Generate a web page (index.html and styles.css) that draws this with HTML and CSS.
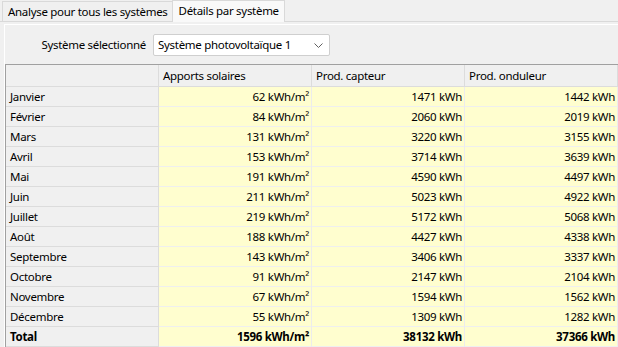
FILE: index.html
```html
<!DOCTYPE html>
<html lang="fr">
<head>
<meta charset="utf-8">
<link rel="stylesheet" href="styles.css">
</head>
<body>
<div class="tabs">
  <div class="tab">Analyse pour tous les systèmes</div>
  <div class="tab active">Détails par système</div>
</div>
<div class="panel">
  <div class="page">
    <div class="selector">
      <label class="sel-label">Système sélectionné</label>
      <div class="combo">
        <span>Système photovoltaïque 1</span>
        <svg class="chev" width="9" height="5" viewBox="0 0 9 5"><path d="M0.5 0.5 L4.5 4.5 L8.5 0.5" fill="none" stroke="#606060" stroke-width="1"/></svg>
      </div>
    </div>
    <div class="grid">
      <div class="c h first"></div>
      <div class="c h">Apports solaires</div>
      <div class="c h">Prod. capteur</div>
      <div class="c h">Prod. onduleur</div>

      <div class="c first">Janvier</div><div class="c v">62 kWh/m²</div><div class="c v">1471 kWh</div><div class="c v">1442 kWh</div>
      <div class="c first">Février</div><div class="c v">84 kWh/m²</div><div class="c v">2060 kWh</div><div class="c v">2019 kWh</div>
      <div class="c first">Mars</div><div class="c v">131 kWh/m²</div><div class="c v">3220 kWh</div><div class="c v">3155 kWh</div>
      <div class="c first">Avril</div><div class="c v">153 kWh/m²</div><div class="c v">3714 kWh</div><div class="c v">3639 kWh</div>
      <div class="c first">Mai</div><div class="c v">191 kWh/m²</div><div class="c v">4590 kWh</div><div class="c v">4497 kWh</div>
      <div class="c first">Juin</div><div class="c v">211 kWh/m²</div><div class="c v">5023 kWh</div><div class="c v">4922 kWh</div>
      <div class="c first">Juillet</div><div class="c v">219 kWh/m²</div><div class="c v">5172 kWh</div><div class="c v">5068 kWh</div>
      <div class="c first">Août</div><div class="c v">188 kWh/m²</div><div class="c v">4427 kWh</div><div class="c v">4338 kWh</div>
      <div class="c first">Septembre</div><div class="c v">143 kWh/m²</div><div class="c v">3406 kWh</div><div class="c v">3337 kWh</div>
      <div class="c first">Octobre</div><div class="c v">91 kWh/m²</div><div class="c v">2147 kWh</div><div class="c v">2104 kWh</div>
      <div class="c first">Novembre</div><div class="c v">67 kWh/m²</div><div class="c v">1594 kWh</div><div class="c v">1562 kWh</div>
      <div class="c first">Décembre</div><div class="c v">55 kWh/m²</div><div class="c v">1309 kWh</div><div class="c v">1282 kWh</div>
      <div class="c first b">Total</div><div class="c v b">1596 kWh/m²</div><div class="c v b">38132 kWh</div><div class="c v b">37366 kWh</div>
    </div>
  </div>
</div>
</body>
</html>
```

FILE: styles.css
```css
* { box-sizing: border-box; }
html, body { margin: 0; padding: 0; }
body {
  width: 618px;
  height: 347px;
  overflow: hidden;
  background: #f0f0f0;
  font-family: "Noto Sans", "Open Sans", sans-serif;
  font-size: 11.5px;
  letter-spacing: -0.3px;
  color: #000;
}
.tabs {
  display: flex;
  align-items: flex-end;
  height: 22px;
  padding-left: 2px;
  border-bottom: 1px solid #d9d9d9;
}
.tab {
  height: 20px;
  line-height: 19px;
  padding: 0 4px 0 5px;
  border: 1px solid #d9d9d9;
  border-bottom: none;
  background: #f0f0f0;
  white-space: nowrap;
}
.tab.active {
  height: 22px;
  line-height: 19px;
  margin-bottom: -1px;
  background: #f9f9f9;
  padding: 0 5px 0 6px;
  margin-left: -1px;
}
.panel {
  padding: 2px 0 0 4px;
}
.page {
  border-top: 1px solid #ffffff;
  border-left: 1px solid #ffffff;
}
.selector {
  display: flex;
  padding-top: 9px;
  height: 39px;
  align-items: flex-start;
}
.sel-label {
  width: 143px;
  text-align: right;
  line-height: 22px;
  padding-right: 2px;
}
.combo {
  margin-left: 5px;
  width: 177px;
  height: 22px;
  border: 1px solid #cfcfcf;
  border-radius: 2px;
  background: #fff;
  display: flex;
  align-items: center;
  justify-content: space-between;
  padding: 0 6px 0 4px;
  line-height: 20px;
}
.chev { display: block; margin-top: 1px; }
.grid {
  display: grid;
  grid-template-columns: 153px 153px 153px 153px;
  border-top: 1px solid #a0a0a0;
  border-left: 1px solid #a0a0a0;
  width: 613px;
}
.c {
  height: 20px;
  line-height: 19px;
  border-right: 1px solid #dcdcdc;
  border-bottom: 1px solid #dcdcdc;
  padding: 0 4px;
  white-space: nowrap;
  background: #f0f0f0;
}
.c.h {
  height: 22px;
  line-height: 21px;
}
.c.v {
  background: #fffecf;
  text-align: right;
  padding-right: 2px;
  border-right-color: #ececec;
  border-bottom-color: #efefef;
}
.b { font-weight: bold; }
```
